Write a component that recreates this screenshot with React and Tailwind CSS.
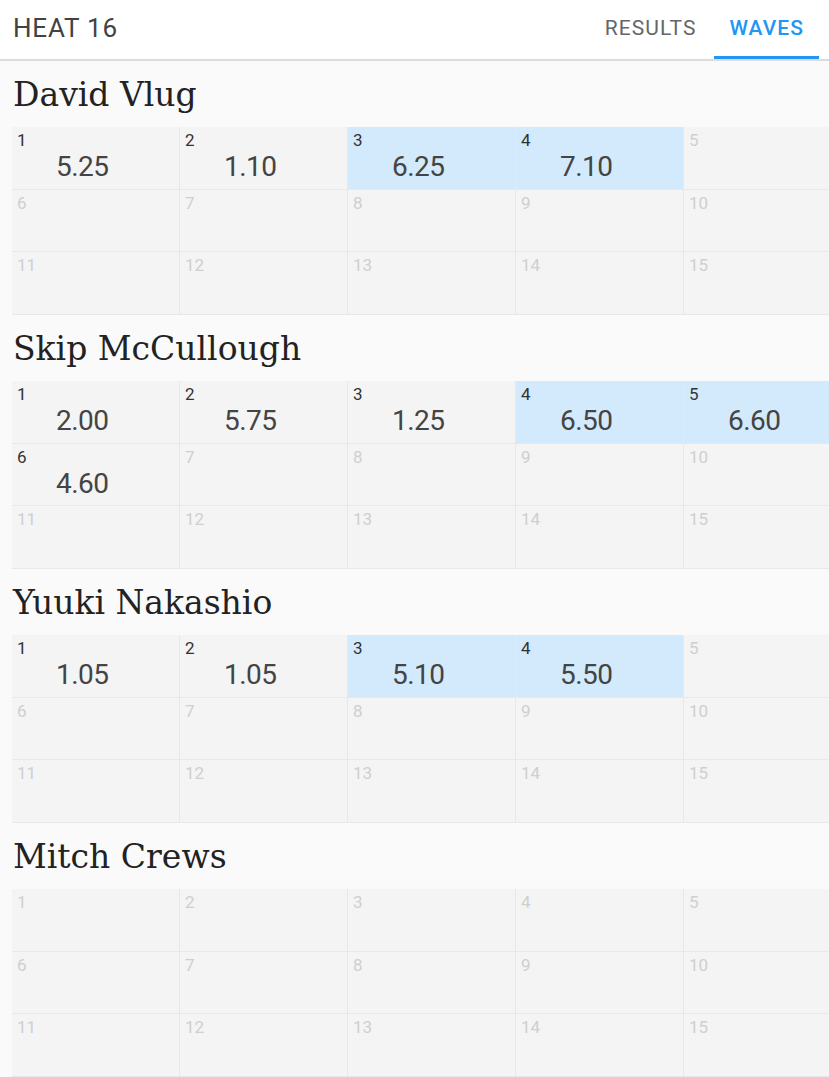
import React from 'react';

const surfers = [
  { name: 'David Vlug', scores: ['5.25', '1.10', '6.25', '7.10'], best: [2, 3] },
  { name: 'Skip McCullough', scores: ['2.00', '5.75', '1.25', '6.50', '6.60', '4.60'], best: [3, 4] },
  { name: 'Yuuki Nakashio', scores: ['1.05', '1.05', '5.10', '5.50'], best: [2, 3] },
  { name: 'Mitch Crews', scores: [], best: [] },
];

const WaveCell = ({ n, score, best }) => {
  const ridden = score !== undefined;
  return (
    <div
      className={`h-[62.5px] border-r border-b border-[#e8e8e8] pl-[5px] pt-[3px] ${
        best ? 'bg-[#d3eafc]' : 'bg-[#f4f4f4]'
      }`}
    >
      <div className={`text-[17px] leading-[20px] ${ridden ? 'text-[#333]' : 'text-[#cfcfcf]'}`}>{n}</div>
      {ridden && (
        <div className="pl-[39px] pt-[2px] text-[28px] leading-[30px] tracking-[-0.02em] text-[#444]">{score}</div>
      )}
    </div>
  );
};

const App = () => {
  return (
    <div className="w-[829px] h-[1077px] overflow-hidden bg-[#fafafa]" style={{ fontFamily: 'Roboto, sans-serif' }}>
      {/* Header */}
      <div className="h-[61px] bg-white border-b-2 border-[#dcdcdc] flex items-stretch justify-between">
        <div className="pl-[13px] flex items-center text-[26px] tracking-[0.03em] text-[#424242] pb-[2px]">HEAT 16</div>
        <div className="flex items-stretch pr-[10px]">
          <div className="px-[18px] flex items-center text-[21px] tracking-[0.05em] text-[#666] pb-[2px]">RESULTS</div>
          <div className="px-[15px] flex items-center text-[21px] tracking-[0.05em] font-medium text-[#2196f3] border-b-[3px] border-[#2196f3] pt-[1px]">
            WAVES
          </div>
        </div>
      </div>

      {surfers.map((s) => (
        <div key={s.name}>
          <div
            className="h-[66px] pl-[13px] pt-[12px] text-[33px] leading-[44px] text-[#222]"
            style={{ fontFamily: '"DejaVu Serif", serif' }}
          >
            {s.name}
          </div>
          <div className="ml-[12px] w-[840px] grid grid-cols-5 h-[187px]">
            {Array.from({ length: 15 }, (_, i) => (
              <WaveCell key={i} n={i + 1} score={s.scores[i]} best={s.best.includes(i)} />
            ))}
          </div>
          <div className="h-px" />
        </div>
      ))}
    </div>
  );
};

export default App;
